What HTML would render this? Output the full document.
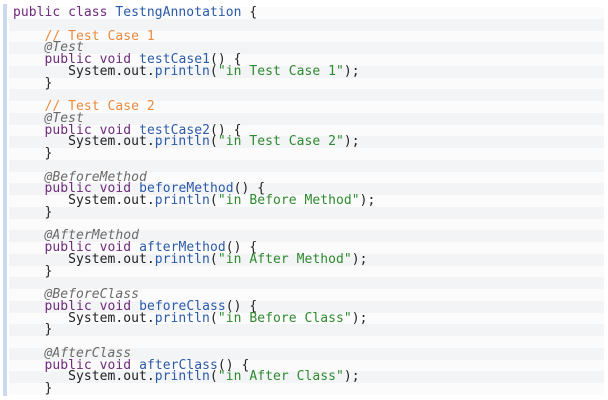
<!DOCTYPE html>
<html><head><style>
body{margin:0;width:608px;height:400px;background:#fff;overflow:hidden;position:relative}
.bar{position:absolute;left:3px;top:4px;width:4px;height:392px;background:#cbd9ef}
.code{position:absolute;left:13px;top:7px;right:4px;font-family:"DejaVu Sans Mono","Liberation Mono",monospace;font-size:13px;letter-spacing:0.05px;color:#222}
.l{height:11.75px;line-height:11.75px;white-space:pre;margin-left:-4px;padding-left:4px}
.l:nth-child(odd){background:#fbfbfc}
.l:nth-child(even){background:#f3f4f6}
.k{color:#6e2a7c}.c{color:#e98a3c}.a{color:#6a6a6a;font-style:italic}.m{color:#2b5aa8}.s{color:#2f8a2f}
</style></head><body>
<div class="bar"></div>
<div class="code">
<div class="l"><span class="k">public class</span> <span class="m">TestngAnnotation</span> {</div>
<div class="l"> </div>
<div class="l">    <span class="c">// Test Case 1</span></div>
<div class="l">    <span class="a">@Test</span></div>
<div class="l">    <span class="k">public void</span> <span class="m">testCase1</span>() {</div>
<div class="l">       System.out.<span class="m">println</span>(<span class="s">"in Test Case 1"</span>);</div>
<div class="l">    }</div>
<div class="l"> </div>
<div class="l">    <span class="c">// Test Case 2</span></div>
<div class="l">    <span class="a">@Test</span></div>
<div class="l">    <span class="k">public void</span> <span class="m">testCase2</span>() {</div>
<div class="l">       System.out.<span class="m">println</span>(<span class="s">"in Test Case 2"</span>);</div>
<div class="l">    }</div>
<div class="l"> </div>
<div class="l">    <span class="a">@BeforeMethod</span></div>
<div class="l">    <span class="k">public void</span> <span class="m">beforeMethod</span>() {</div>
<div class="l">       System.out.<span class="m">println</span>(<span class="s">"in Before Method"</span>);</div>
<div class="l">    }</div>
<div class="l"> </div>
<div class="l">    <span class="a">@AfterMethod</span></div>
<div class="l">    <span class="k">public void</span> <span class="m">afterMethod</span>() {</div>
<div class="l">       System.out.<span class="m">println</span>(<span class="s">"in After Method"</span>);</div>
<div class="l">    }</div>
<div class="l"> </div>
<div class="l">    <span class="a">@BeforeClass</span></div>
<div class="l">    <span class="k">public void</span> <span class="m">beforeClass</span>() {</div>
<div class="l">       System.out.<span class="m">println</span>(<span class="s">"in Before Class"</span>);</div>
<div class="l">    }</div>
<div class="l"> </div>
<div class="l">    <span class="a">@AfterClass</span></div>
<div class="l">    <span class="k">public void</span> <span class="m">afterClass</span>() {</div>
<div class="l">       System.out.<span class="m">println</span>(<span class="s">"in After Class"</span>);</div>
<div class="l">    }</div>
</div>
</body></html>
